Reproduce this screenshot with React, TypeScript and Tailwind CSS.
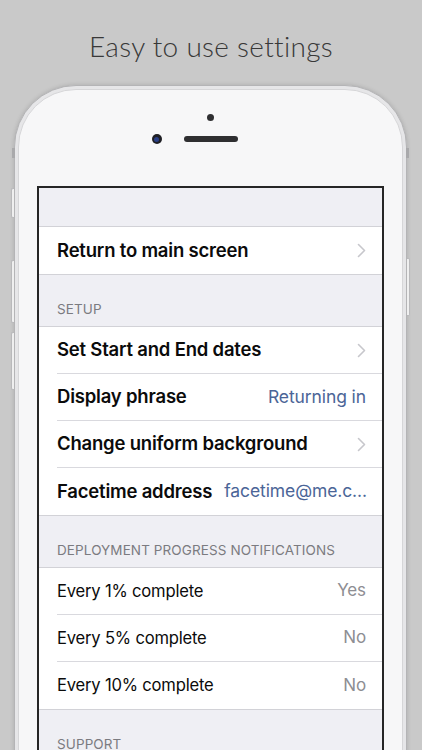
import type { ReactNode } from "react";

const font = { fontFamily: "Inter, 'Noto Sans', 'Liberation Sans', sans-serif" };

function Chevron() {
  return (
    <svg width="9" height="15" viewBox="0 0 9 15" fill="none" className="shrink-0">
      <path d="M1.5 1.5 7.5 7.5 1.5 13.5" stroke="#c7c7cc" strokeWidth="1.6" strokeLinecap="round" strokeLinejoin="round" />
    </svg>
  );
}

interface RowProps {
  label: string;
  bold?: boolean;
  value?: string;
  valueTone?: "blue" | "gray";
  chevron?: boolean;
  last?: boolean;
}

function Row({ label, bold = false, value, valueTone = "gray", chevron = false, last = false }: RowProps) {
  return (
    <div className="bg-white pl-[18px]">
      <div
        className={
          "flex h-[47px] items-center justify-between pr-[16px] " + (last ? "" : "border-b border-[#d9d9de]")
        }
      >
        <span
          className={
            "whitespace-nowrap tracking-[-0.2px] text-[#0b0b0b] " +
            (bold ? "text-[18.5px] font-semibold" : "text-[16.6px] font-normal")
          }
        >
          {label}
        </span>
        {value && (
          <span
            className={
              "ml-3 whitespace-nowrap tracking-[-0.1px] " +
              (valueTone === "blue" ? "text-[17.5px] text-[#4b6597]" : "text-[17px] text-[#8e8e93]")
            }
          >
            {value}
          </span>
        )}
        {chevron && <Chevron />}
      </div>
    </div>
  );
}

function Group({ children }: { children: ReactNode }) {
  return <div className="border-y border-[#d2d2d7]">{children}</div>;
}

function Header({ children }: { children: ReactNode }) {
  return (
    <div className="flex h-[51px] items-end px-[18px] pb-[7px] text-[13.5px] uppercase tracking-[0.1px] text-[#7b7b80]">
      {children}
    </div>
  );
}

function SideButton({ className }: { className: string }) {
  return <div className={"absolute w-[3px] border border-[#b9b9bb] bg-[#efefef] " + className} />;
}

export default function App() {
  return (
    <div className="h-[750px] w-[422px] overflow-hidden bg-[#c9c9c9]" style={font}>
      <h1
        className="pt-[28px] text-center text-[28px] font-light leading-[36px] tracking-[0.3px] text-[#383838]"
        style={{ fontFamily: "Lato, 'Open Sans', sans-serif" }}
      >
        Easy to use settings
      </h1>

      <div className="relative ml-[14px] mt-[21px] w-[393px]">
        {/* antenna bands and side buttons */}
        <div className="absolute -left-[2px] top-[63px] h-[10px] w-[3px] bg-[#a9a9ab]" />
        <div className="absolute -right-[2px] top-[63px] h-[10px] w-[3px] bg-[#a9a9ab]" />
        <SideButton className="-left-[3px] top-[103px] h-[30px] rounded-l-[2px] border-r-0" />
        <SideButton className="-left-[3px] top-[175px] h-[63px] rounded-l-[2px] border-r-0" />
        <SideButton className="-left-[3px] top-[247px] h-[58px] rounded-l-[2px] border-r-0" />
        <SideButton className="-right-[3px] top-[173px] h-[58px] rounded-r-[2px] border-l-0" />

        <div className="h-[720px] rounded-t-[62px] border border-[#b4b4b6] bg-[#e6e6e8] p-[3px] shadow-[0_0_4px_rgba(0,0,0,0.15)]">
          <div className="flex h-full flex-col rounded-t-[58px] border border-[#d6d6d8] bg-[#f7f7f8] px-[18px]">
            {/* sensor, camera, earpiece */}
            <div className="flex flex-col items-center pt-[24px]">
              <div className="h-[7px] w-[7px] rounded-full bg-[#2f2f31]" />
              <div className="mt-[13px] flex items-center gap-[22px]">
                <div className="flex h-[10px] w-[10px] items-center justify-center rounded-full bg-[#1f1f24]">
                  <div className="h-[5px] w-[5px] rounded-full bg-[#2a3f86]" />
                </div>
                <div className="h-[6px] w-[54px] rounded-full bg-[#2f2f31]" />
                <div className="w-[10px]" />
              </div>
            </div>

            {/* screen */}
            <div className="mt-[42px] flex-1 border-2 border-b-0 border-[#262626] bg-[#efeff4]">
              <div className="h-[38px]" />
              <Group>
                <Row label="Return to main screen" bold chevron last />
              </Group>

              <Header>Setup</Header>
              <Group>
                <Row label="Set Start and End dates" bold chevron />
                <Row label="Display phrase" bold value="Returning in" valueTone="blue" />
                <Row label="Change uniform background" bold chevron />
                <Row label="Facetime address" bold value="facetime@me.c..." valueTone="blue" last />
              </Group>

              <Header>Deployment progress notifications</Header>
              <Group>
                <Row label="Every 1% complete" value="Yes" />
                <Row label="Every 5% complete" value="No" />
                <Row label="Every 10% complete" value="No" last />
              </Group>

              <Header>Support</Header>
            </div>
          </div>
        </div>
      </div>
    </div>
  );
}
